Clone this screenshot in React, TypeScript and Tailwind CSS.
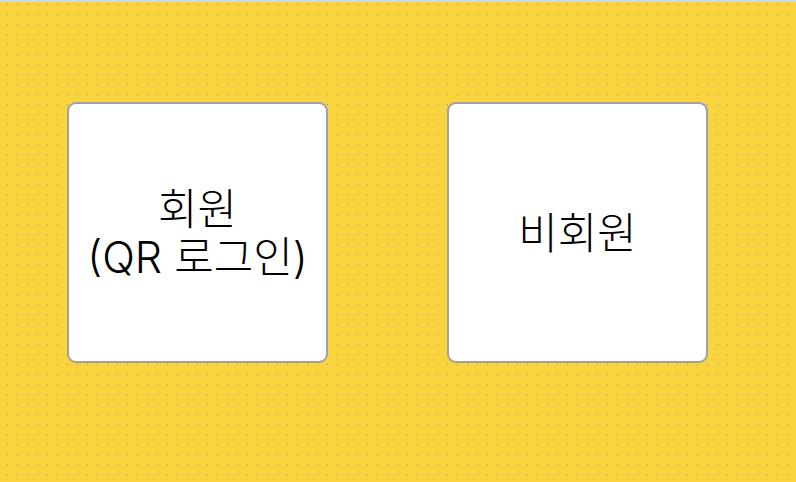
export default function App() {
  return (
    <div className="w-[796px] h-[482px] flex flex-col overflow-hidden" style={{ fontFamily: 'Inter, "Noto Sans CJK KR", sans-serif' }}>
      <div className="h-[2px] shrink-0 bg-[#c8dbe6]" />
      <div className="flex-1 bg-[#8f8f9a] bg-[image:linear-gradient(90deg,#f9d43e_9px,transparent_9px),linear-gradient(180deg,#f9d43e_9px,transparent_9px)] bg-[size:10px_10px] bg-[position:8px_3px] flex items-start pl-[67px] pt-[100px] gap-[119px]">
        <button className="w-[261px] h-[261px] bg-white border-2 border-[#9f9fa8] rounded-[9px] flex flex-col items-center justify-center text-center text-[43px] font-light text-black">
          <span className="block leading-[48px]">회원</span>
          <span className="block leading-[48px]">(QR 로그인)</span>
        </button>
        <button className="w-[261px] h-[261px] bg-white border-2 border-[#9f9fa8] rounded-[9px] flex items-center justify-center text-center text-[43px] font-light text-black">
          <span className="leading-[48px]">비회원</span>
        </button>
      </div>
    </div>
  );
}
